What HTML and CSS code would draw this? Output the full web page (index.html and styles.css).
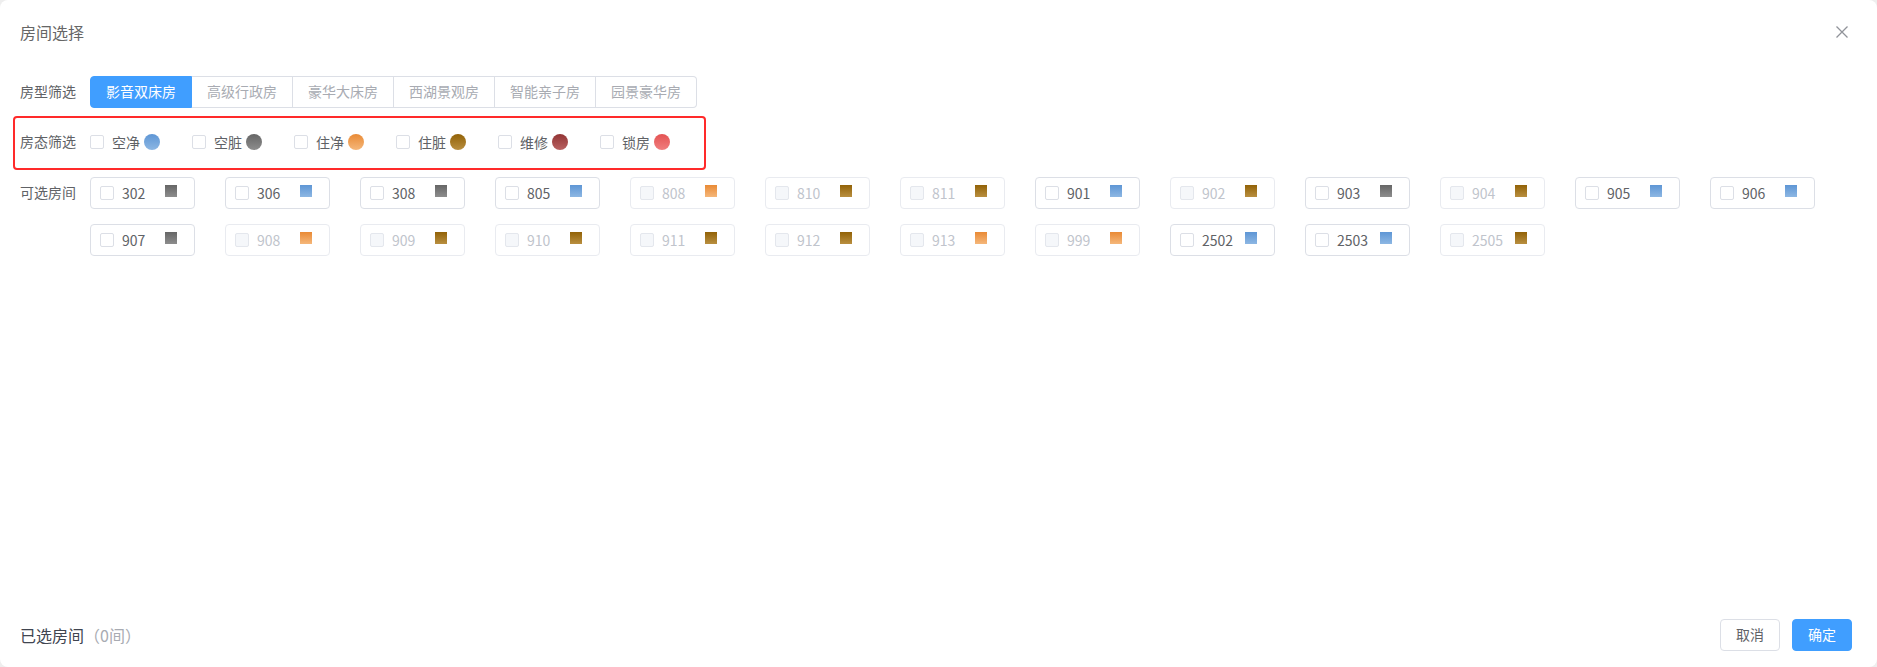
FILE: index.html
```html
<!DOCTYPE html>
<html lang="zh-CN">
<head>
<meta charset="utf-8">
<title>房间选择</title>
<link rel="stylesheet" href="styles.css">
</head>
<body>
<div class="dialog">
  <div class="header">
    <span class="title">房间选择</span>
    <svg class="close" width="12" height="12" viewBox="0 0 12 12"><path d="M0.5 0.5 L11.5 11.5 M11.5 0.5 L0.5 11.5" stroke="#909399" stroke-width="1.3" fill="none"/></svg>
  </div>

  <div class="row row-type">
    <span class="label">房型筛选</span>
    <div class="tabs">
      <span class="tab active">影音双床房</span>
      <span class="tab">高级行政房</span>
      <span class="tab">豪华大床房</span>
      <span class="tab">西湖景观房</span>
      <span class="tab">智能亲子房</span>
      <span class="tab">园景豪华房</span>
    </div>
  </div>

  <div class="row row-status">
    <span class="label">房态筛选</span>
    <div class="status-list">
      <label class="status"><span class="cb"></span><span class="st-text">空净</span><span class="dot c-blue"></span></label>
      <label class="status"><span class="cb"></span><span class="st-text">空脏</span><span class="dot c-gray"></span></label>
      <label class="status"><span class="cb"></span><span class="st-text">住净</span><span class="dot c-orange"></span></label>
      <label class="status"><span class="cb"></span><span class="st-text">住脏</span><span class="dot c-brown"></span></label>
      <label class="status"><span class="cb"></span><span class="st-text">维修</span><span class="dot c-maroon"></span></label>
      <label class="status"><span class="cb"></span><span class="st-text">锁房</span><span class="dot c-red"></span></label>
    </div>
  </div>

  <div class="row row-rooms">
    <span class="label rooms-label">可选房间</span>
    <div class="rooms">
      <div class="room"><span class="cb"></span><span class="num">302</span><span class="sq c-gray"></span></div>
      <div class="room"><span class="cb"></span><span class="num">306</span><span class="sq c-blue"></span></div>
      <div class="room"><span class="cb"></span><span class="num">308</span><span class="sq c-gray"></span></div>
      <div class="room"><span class="cb"></span><span class="num">805</span><span class="sq c-blue"></span></div>
      <div class="room disabled"><span class="cb"></span><span class="num">808</span><span class="sq c-orange"></span></div>
      <div class="room disabled"><span class="cb"></span><span class="num">810</span><span class="sq c-brown"></span></div>
      <div class="room disabled"><span class="cb"></span><span class="num">811</span><span class="sq c-brown"></span></div>
      <div class="room"><span class="cb"></span><span class="num">901</span><span class="sq c-blue"></span></div>
      <div class="room disabled"><span class="cb"></span><span class="num">902</span><span class="sq c-brown"></span></div>
      <div class="room"><span class="cb"></span><span class="num">903</span><span class="sq c-gray"></span></div>
      <div class="room disabled"><span class="cb"></span><span class="num">904</span><span class="sq c-brown"></span></div>
      <div class="room"><span class="cb"></span><span class="num">905</span><span class="sq c-blue"></span></div>
      <div class="room"><span class="cb"></span><span class="num">906</span><span class="sq c-blue"></span></div>
      <div class="room"><span class="cb"></span><span class="num">907</span><span class="sq c-gray"></span></div>
      <div class="room disabled"><span class="cb"></span><span class="num">908</span><span class="sq c-orange"></span></div>
      <div class="room disabled"><span class="cb"></span><span class="num">909</span><span class="sq c-brown"></span></div>
      <div class="room disabled"><span class="cb"></span><span class="num">910</span><span class="sq c-brown"></span></div>
      <div class="room disabled"><span class="cb"></span><span class="num">911</span><span class="sq c-brown"></span></div>
      <div class="room disabled"><span class="cb"></span><span class="num">912</span><span class="sq c-brown"></span></div>
      <div class="room disabled"><span class="cb"></span><span class="num">913</span><span class="sq c-orange"></span></div>
      <div class="room disabled"><span class="cb"></span><span class="num">999</span><span class="sq c-orange"></span></div>
      <div class="room"><span class="cb"></span><span class="num">2502</span><span class="sq c-blue"></span></div>
      <div class="room"><span class="cb"></span><span class="num">2503</span><span class="sq c-blue"></span></div>
      <div class="room disabled"><span class="cb"></span><span class="num">2505</span><span class="sq c-brown"></span></div>
    </div>
  </div>

  <div class="footer">
    <div class="selected">已选房间<span class="count">（0间）</span></div>
    <div class="buttons">
      <button class="btn">取消</button>
      <button class="btn primary">确定</button>
    </div>
  </div>
</div>
</body>
</html>
```

FILE: styles.css
```css
html, body {
  margin: 0;
  padding: 0;
  background: #eeeeee;
}

body {
  font-family: "Noto Sans CJK SC", "Noto Sans", sans-serif;
  color: #606266;
}

.dialog {
  box-sizing: border-box;
  height: 667px;
  background: #ffffff;
  border-radius: 8px;
  padding: 0 25px 16px 20px;
  display: flex;
  flex-direction: column;
}

.header {
  box-sizing: border-box;
  height: 65px;
  padding-bottom: 2px;
  display: flex;
  align-items: center;
  justify-content: space-between;
}

.title {
  font-size: 16px;
  line-height: 24px;
  color: #666666;
}

.close {
  margin-right: 4px;
}

.row {
  display: flex;
  align-items: center;
}

.label {
  width: 70px;
  flex: none;
  font-size: 14px;
  line-height: 20px;
  padding-bottom: 2px;
  color: #606266;
}

.row-type {
  margin-top: 11px;
  height: 32px;
}

.tabs {
  display: flex;
}

.tab {
  box-sizing: border-box;
  height: 32px;
  padding: 0 15px 2px;
  font-size: 14px;
  line-height: 28px;
  color: #a8abb2;
  border: 1px solid #dcdfe6;
  border-left: none;
  background: #ffffff;
}

.tab:first-child {
  border-left: 1px solid #dcdfe6;
  border-radius: 4px 0 0 4px;
}

.tab:last-child {
  border-radius: 0 4px 4px 0;
}

.tab.active {
  background: #409eff;
  border-color: #409eff;
  color: #ffffff;
}

.row-status {
  box-sizing: border-box;
  margin-top: 8px;
  margin-left: -7px;
  width: 693px;
  height: 54px;
  padding-left: 5px;
  padding-bottom: 2px;
  border: 2px solid #ff2a2a;
  border-radius: 4px;
}

.status-list {
  display: flex;
}

.status {
  display: flex;
  align-items: center;
  margin-right: 32px;
}

.cb {
  box-sizing: border-box;
  width: 14px;
  height: 14px;
  flex: none;
  border: 1px solid #dcdfe6;
  border-radius: 2px;
  background: #ffffff;
}

.st-text {
  margin-left: 8px;
  font-size: 14px;
  line-height: 20px;
  padding-bottom: 1px;
  color: #606266;
}

.dot {
  width: 16px;
  height: 16px;
  border-radius: 50%;
  margin-left: 4px;
}

.row-rooms {
  margin-top: 7px;
  align-items: flex-start;
}

.rooms-label {
  margin-top: 5px;
}

.rooms {
  display: grid;
  grid-template-columns: repeat(13, 105px);
  column-gap: 30px;
  row-gap: 15px;
}

.room {
  box-sizing: border-box;
  width: 105px;
  height: 32px;
  display: flex;
  align-items: center;
  padding-left: 9px;
  padding-bottom: 1px;
  border: 1px solid #dcdfe6;
  border-radius: 4px;
}

.num {
  width: 43px;
  margin-left: 8px;
  font-size: 14px;
  line-height: 20px;
  color: #606266;
}

.sq {
  width: 12px;
  height: 12px;
  margin-top: -3px;
}

.room.disabled {
  border-color: #e9ebf0;
}

.room.disabled .num {
  color: #c0c4cc;
}

.room.disabled .cb {
  background: #f5f7fa;
  border-color: #e4e7ed;
}

.c-blue { background: linear-gradient(#5e96d5, #8db7e3); }
.c-gray { background: linear-gradient(#666666, #8d8d8d); }
.c-orange { background: linear-gradient(#e98a35, #f5b77a); }
.c-brown { background: linear-gradient(#926207, #b98f40); }
.c-maroon { background: linear-gradient(#923434, #b96262); }
.c-red { background: linear-gradient(#e45353, #f07e7e); }

.footer {
  margin-top: auto;
  display: flex;
  align-items: center;
  justify-content: space-between;
}

.selected {
  font-size: 16px;
  line-height: 24px;
  color: #404550;
}

.count {
  color: #a8abb2;
}

.buttons {
  display: flex;
  gap: 12px;
}

.btn {
  box-sizing: border-box;
  width: 60px;
  height: 32px;
  padding: 0 0 1px;
  font-family: inherit;
  font-size: 14px;
  line-height: 29px;
  color: #606266;
  background: #ffffff;
  border: 1px solid #dcdfe6;
  border-radius: 4px;
}

.btn.primary {
  background: #409eff;
  border-color: #409eff;
  color: #ffffff;
}
```
